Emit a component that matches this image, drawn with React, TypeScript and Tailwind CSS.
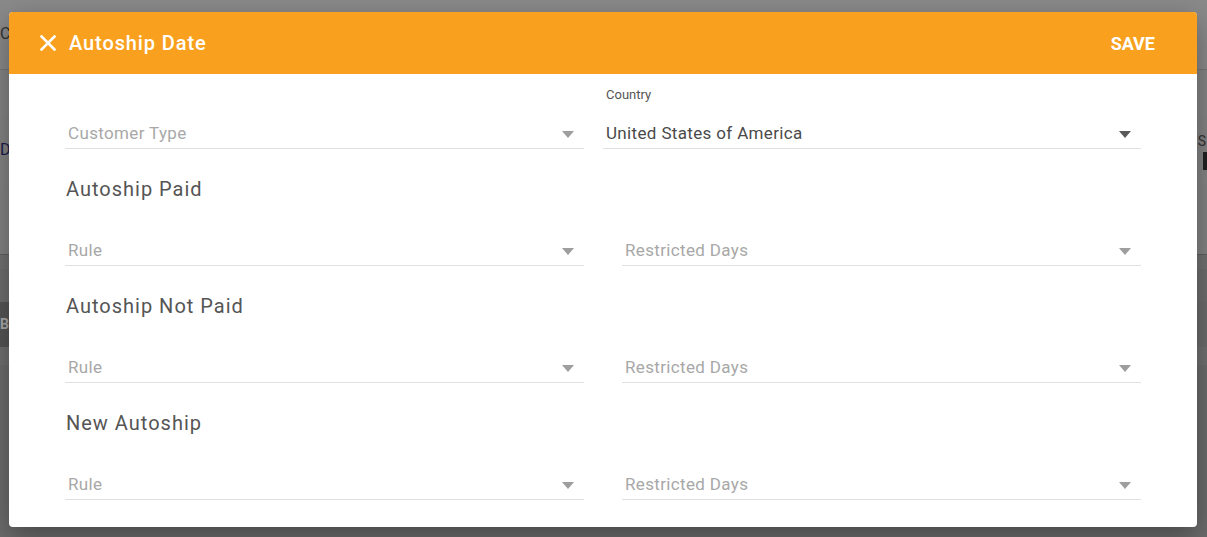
import React from "react";

const Arrow = ({ dark }: { dark?: boolean }) => (
  <svg width="12" height="7" viewBox="0 0 12 7" className="shrink-0">
    <polygon points="0,0 12,0 6,7" fill={dark ? "#5a5a5a" : "#9e9e9e"} />
  </svg>
);

const Select = ({ value, placeholder }: { value?: string; placeholder?: string }) => (
  <div className="h-[31px] border-b border-[#e0e0e0] flex items-center justify-between pl-[3px] pr-[10px] pt-[2px]">
    {value ? (
      <span className="text-[17px] tracking-[0.35px] text-[#4a4a4a]">{value}</span>
    ) : (
      <span className="text-[17px] tracking-[0.35px] text-[#a8a8a8]">{placeholder}</span>
    )}
    <Arrow dark={!!value} />
  </div>
);

const Section = ({ title }: { title: string }) => (
  <div>
    <div className="mt-[27px] h-[24px] leading-[26px] text-[20px] tracking-[1px] text-[#555] pl-[1px]">{title}</div>
    <div className="mt-[35px] grid grid-cols-2 gap-[38px]">
      <Select placeholder="Rule" />
      <Select placeholder="Restricted Days" />
    </div>
  </div>
);

export default function App() {
  return (
    <div className="relative h-[537px] w-full overflow-hidden bg-[#6c6c6c] font-['Roboto',sans-serif]">
      {/* dimmed page behind the dialog */}
      <div className="flex flex-col">
        <div className="h-[70px] bg-[#8a8a8a] border-b border-[#777] text-[#333] text-[16px] pt-[22px]">
          <span>Cu</span>
        </div>
        <div className="h-[45px] bg-[#858585]" />
        <div className="h-[70px] bg-[#848484] flex items-center justify-between text-[16px]">
          <span className="text-[#1a1a4a]">Di</span>
          <div className="flex flex-col items-end">
            <span className="text-[#333] text-[14px] pr-[1px]">S</span>
            <div className="w-[4px] h-[18px] bg-[#222]" />
          </div>
        </div>
        <div className="h-[70px] bg-[#838383] border-b border-[#606060]" />
        <div className="h-[14px] bg-[#727272]" />
        <div className="h-[33px] bg-[#6e6e6e]" />
        <div className="h-[45px] bg-[#565656] w-[12px] flex items-center text-[#aaa] text-[14px] font-bold">
          <span>B</span>
        </div>
        <div className="h-[18px] bg-[#707070]" />
      </div>

      {/* dialog */}
      <div className="absolute left-[9px] top-[12px] w-[1188px] h-[515px] rounded-[4px] bg-white shadow-[0_10px_30px_rgba(0,0,0,0.35)] overflow-hidden">
        <div className="h-[62px] bg-[#f9a11f] flex items-center justify-between pl-[31px] pr-[42px] text-white">
          <div className="flex items-center gap-[14px]">
            <svg width="16" height="16" viewBox="0 0 16 16">
              <path d="M1.5 1.5 L14.5 14.5 M14.5 1.5 L1.5 14.5" stroke="#fff" strokeWidth="2.6" strokeLinecap="square" />
            </svg>
            <span className="text-[20px] font-medium tracking-[0.9px] -ml-[1px]">Autoship Date</span>
          </div>
          <span className="text-[18px] font-bold">SAVE</span>
        </div>

        <div className="px-[56px]">
          <div className="pt-[11px] flex items-end gap-[19px]">
            <div className="w-[519px]">
              <Select placeholder="Customer Type" />
            </div>
            <div className="flex-1">
              <div className="h-[20px] leading-[20px] text-[13px] text-[#555] pl-[3px]">Country</div>
              <div className="mt-[13px]">
                <Select value="United States of America" />
              </div>
            </div>
          </div>
          <Section title="Autoship Paid" />
          <Section title="Autoship Not Paid" />
          <Section title="New Autoship" />
        </div>
      </div>
    </div>
  );
}
